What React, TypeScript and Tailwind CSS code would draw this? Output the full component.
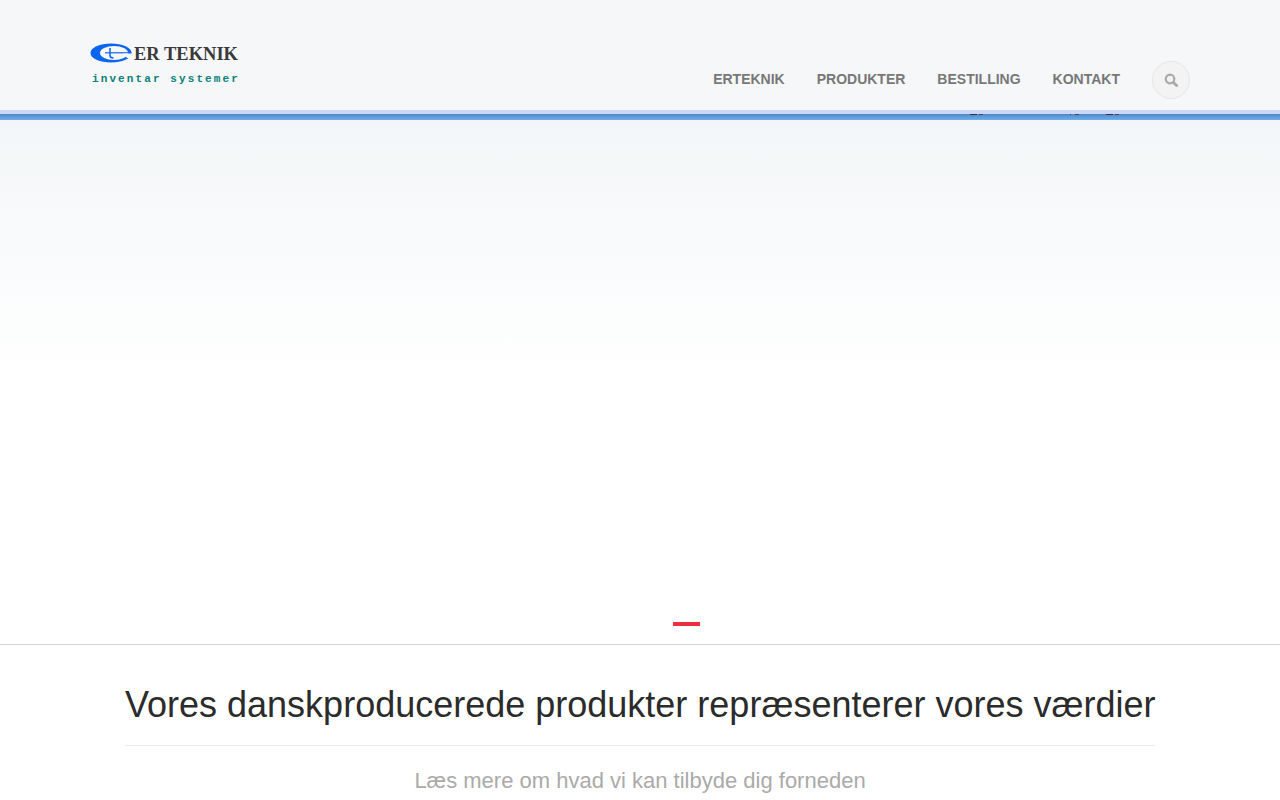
export default function App() {
  const sans = { fontFamily: '"Liberation Sans", Arial, sans-serif' };
  return (
    <div className="w-full h-[800px] overflow-hidden bg-white font-['Liberation_Sans',Arial,sans-serif]">
      <header className="h-[110px] bg-[#f6f7f9] flex items-start justify-between pl-[90px] pr-[90px]">
        <div className="mt-[43px] w-[150px]">
          <div className="flex items-center h-[20px]">
            <svg width="42" height="20" viewBox="0 0 42 20" className="shrink-0">
              <ellipse cx="21" cy="10" rx="20.5" ry="9.5" fill="#0a66f0" />
              <ellipse cx="24" cy="10" rx="14" ry="7" fill="#f6f7f9" />
              <path d="M15 9.2H41.5V10.4H15Z" fill="#0a66f0" />
              <path d="M20 5V12.5Q20 15 23.5 15" stroke="#0a66f0" strokeWidth="1.5" fill="none" />
              <path d="M33 10.6H42V15H37Z" fill="#f6f7f9" />
            </svg>
            <span className="ml-[2px] mt-[1px] font-['Liberation_Serif',serif] font-bold text-[18.5px] leading-[20px] text-[#3a3a3a] whitespace-nowrap">ER TEKNIK</span>
          </div>
          <div className="mt-[9px] font-['Liberation_Mono',monospace] font-bold text-[11px] leading-[14px] text-[#0b7f78] tracking-[2.1px] whitespace-nowrap pl-[2px]">inventar systemer</div>
        </div>
        <nav className="flex items-start mt-[61px]">
          <a className="text-[14px] font-bold text-[#777777] leading-[36px]">ERTEKNIK</a>
          <a className="ml-[32px] text-[14px] font-bold text-[#777777] leading-[36px]">PRODUKTER</a>
          <a className="ml-[32px] text-[14px] font-bold text-[#777777] leading-[36px]">BESTILLING</a>
          <a className="ml-[32px] text-[14px] font-bold text-[#777777] leading-[36px]">KONTAKT</a>
          <div className="ml-[32px] w-[38px] h-[38px] rounded-full border border-[#e6e6e6] bg-[#f3f3f4] flex items-center justify-center">
            <svg width="14" height="14" viewBox="0 0 14 14" fill="none" stroke="#aaaaaa" className="-mt-[1px]">
              <circle cx="6" cy="6" r="4.3" strokeWidth="2.2" />
              <path d="M9.4 9.4L12.6 12.6" strokeWidth="2.8" strokeLinecap="round" />
            </svg>
          </div>
        </nav>
      </header>
      <div className="h-[4px] bg-[#ccd6f8]" />
      <div className="relative h-[6px] bg-gradient-to-b from-[#4f88c8] to-[#70aeee]">
        <span className="absolute left-[970px] top-0 w-[7px] h-[1px] bg-[#333333]" />
        <span className="absolute left-[979px] top-0 w-[4px] h-[1px] bg-[#444444]" />
        <span className="absolute left-[1070px] top-0 w-[1px] h-[1px] bg-[#444444]" />
        <span className="absolute left-[1075px] top-0 w-[4px] h-[1px] bg-[#444444]" />
        <span className="absolute left-[1106px] top-0 w-[7px] h-[1px] bg-[#333333]" />
        <span className="absolute left-[1115px] top-0 w-[4px] h-[1px] bg-[#444444]" />
      </div>
      <div className="h-[524px] bg-gradient-to-b from-[#f3f6f8] via-[#ffffff] via-50% to-[#ffffff] flex flex-col items-center">
        <div className="mt-[502px] ml-[93px] w-[27px] h-[4px] bg-[#ec2f3b]" />
      </div>
      <div className="h-[1px] bg-[#d4d4d4]" />
      <section className="w-[1030px] mx-auto text-center" style={sans}>
        <h1 className="mt-[38px] text-[36px] leading-[44px] text-[#2b2b2b] whitespace-nowrap pb-[18px] border-b border-[#ececec]">Vores danskproducerede produkter repræsenterer vores værdier</h1>
        <p className="mt-[21px] text-[22px] leading-[28px] text-[#aaaaaa]">Læs mere om hvad vi kan tilbyde dig forneden</p>
      </section>
    </div>
  );
}
